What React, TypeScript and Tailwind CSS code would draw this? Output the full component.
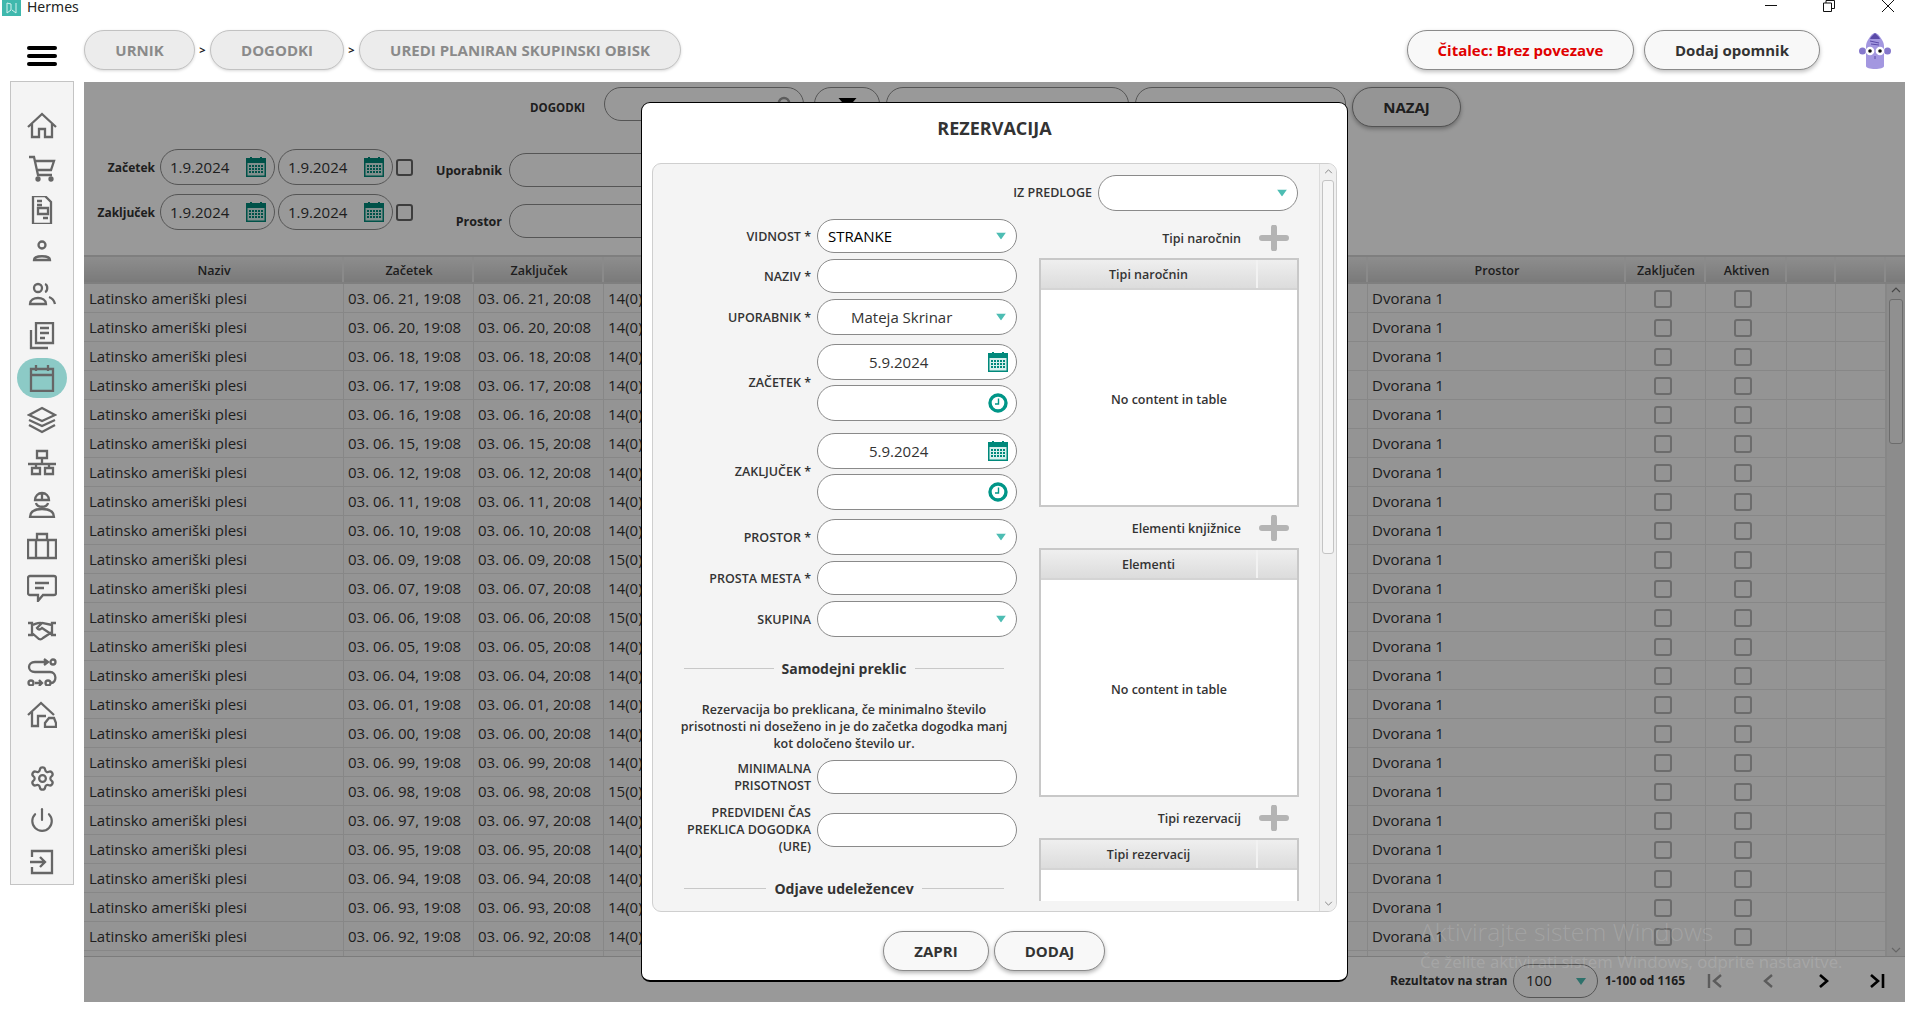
import type { ReactNode } from "react";
import { Power, Settings } from "lucide-react";

const rows = [
  ["21", "14"], ["20", "14"], ["18", "14"], ["17", "14"], ["16", "14"], ["15", "14"],
  ["12", "14"], ["11", "14"], ["10", "14"], ["09", "15"], ["07", "14"], ["06", "15"],
  ["05", "14"], ["04", "14"], ["01", "14"], ["00", "14"], ["99", "14"], ["98", "15"],
  ["97", "14"], ["95", "14"], ["94", "14"], ["93", "14"], ["92", "14"], ["91", "14"],
];

const sideIcon = "fill-none stroke-[#666] stroke-[2.3]";

function Ico({ children, active }: { children: ReactNode; active?: boolean }) {
  return (
    <div className="h-[42px] flex items-center justify-center">
      <div className={active ? "w-[50px] h-[40px] rounded-full bg-[#8ccac6] flex items-center justify-center" : "flex items-center justify-center"}>
        <svg viewBox="0 0 30 28" className={`w-[30px] h-[28px] ${sideIcon} ${active ? "stroke-[#3f5f5d]" : ""}`}>
          {children}
        </svg>
      </div>
    </div>
  );
}

function Sidebar() {
  return (
    <div className="ml-[10px] w-[64px] h-[804px] bg-[#f4f4f4] border border-[#c4c4c4] pt-[23px] flex flex-col">
      <Ico><path d="M1 15 15 2l14 13M5 12v13h7v-8h6v8h7V12" /></Ico>
      <Ico>
        <path d="M2 3h5l4 18h14M8 7h19l-3 9H10" />
        <circle cx="11" cy="25" r="1.5" className="fill-[#666]" />
        <circle cx="24" cy="25" r="1.5" className="fill-[#666]" />
      </Ico>
      <Ico>
        <path d="M6 0h12l6 6v22H6zM10 5h5M10 9h5M11 12h10v6H11zM16 22h5" />
      </Ico>
      <Ico>
        <circle cx="15" cy="7" r="3.5" />
        <path d="M7 22c0-5 16-5 16 0z" />
      </Ico>
      <Ico>
        <circle cx="11" cy="8" r="4" />
        <path d="M18 4c3 1 3 7 0 8M3 24c0-8 16-8 16 0zM22 17c3 1 5 3 6 7" />
      </Ico>
      <Ico>
        <path d="M9 1h17v20H9zM13 6h9M13 11h9M13 16h5M4 8v18h17" />
      </Ico>
      <Ico active>
        <path d="M4 5h22v22H4zM4 11h22M9 1v6M21 1v6" />
      </Ico>
      <Ico>
        <path d="M15 2 28 9l-13 6L2 9zM2 14l13 6 13-6M2 19l13 7 13-7" />
      </Ico>
      <Ico>
        <path d="M10 3h10v7H10zM15 10v6M1 16h28M5 20h8v6H5zM18 20h8v6h-8zM9 16v4M22 16v4" />
      </Ico>
      <Ico>
        <path d="M8 10a7 7 0 0 1 14 0zM15 3v7M9 13c1 5 11 5 12 0M3 27c0-7 6-8 12-8s12 1 12 8z" />
      </Ico>
      <Ico>
        <path d="M1 8h28v18H1zM10 8V2h10v6M9 8v18M21 8v18" />
      </Ico>
      <Ico>
        <path d="M3 2h24a2 2 0 0 1 2 2v15a2 2 0 0 1-2 2H16l-5 6v-6H3a2 2 0 0 1-2-2V4a2 2 0 0 1 2-2zM8 9h14M8 14h9" />
      </Ico>
      <Ico>
        <path d="M1 7h4v12H1M29 7h-4v12h4M5 9c4-1 6-3 10-2l10 2M5 17l7 6c2 1 3 0 4-1l9-6M15 7l-5 5c1 2 3 2 5 0l9 6" />
      </Ico>
      <Ico>
        <circle cx="26" cy="4" r="2.5" />
        <circle cx="4" cy="25" r="2.5" />
        <circle cx="21" cy="25" r="2.5" />
        <path d="M19 4H8c-8 0-8 10 0 10h15c7 0 7 11 1 11M17 1l4 3-4 3M8 25h6M12 22l3 3-3 3" />
      </Ico>
      <Ico>
        <path d="M1 15 14 3l13 12M5 12v14h6V16h8M22 18h5l2 5v4H18v-4z" />
      </Ico>
      <div className="mt-[22px]">
        <div className="h-[42px] flex items-center justify-center">
          <Settings className="w-[27px] h-[29px] text-[#666]" strokeWidth={2} />
        </div>
        <div className="h-[42px] flex items-center justify-center">
          <Power className="w-[26px] h-[26px] text-[#666]" strokeWidth={2} />
        </div>
        <Ico>
          <path d="M5 9V3h20v22H5v-6M3 14h15M13 9l5 5-5 5" />
        </Ico>
      </div>
    </div>
  );
}

function CalIcon({ className }: { className: string }) {
  return (
    <svg viewBox="0 0 20 20" className={className}>
      <rect x="0" y="1" width="20" height="19" fill="#00897b" />
      <rect x="4" y="0" width="2" height="2" fill="#00897b" />
      <rect x="14" y="0" width="2" height="2" fill="#00897b" />
      <rect x="1.5" y="6" width="17" height="12.5" fill="#d8efec" />
      {[8, 11, 14].map((y) =>
        [4, 7, 10, 13, 16].map((x) => <rect key={`${x}-${y}`} x={x - 1} y={y} width="2" height="2" fill="#00897b" />)
      )}
    </svg>
  );
}

function Clock() {
  return (
    <svg viewBox="0 0 20 20" className="w-[20px] h-[20px]">
      <circle cx="10" cy="10" r="8" fill="none" stroke="#009688" strokeWidth="3.4" />
      <path d="M10.5 5.5v5.5H7" fill="none" stroke="#009688" strokeWidth="1.4" />
    </svg>
  );
}

function Tri({ className = "" }: { className?: string }) {
  return (
    <svg viewBox="0 0 10 7" className={`w-[10px] h-[7px] ${className}`}>
      <path d="M0 0h10L5 7z" fill="#4dbdb3" />
    </svg>
  );
}

function Field({ h = "h-[34px]", children }: { h?: string; children?: ReactNode }) {
  return (
    <div className={`w-[200px] ${h} shrink-0 bg-white border-[1.5px] border-[#8a8a8a] rounded-full flex items-center text-[15px] text-[#333] relative`}>
      {children}
    </div>
  );
}

function FormRow({ label, children, className = "" }: { label: ReactNode; children: ReactNode; className?: string }) {
  return (
    <div className={`flex items-center ${className}`}>
      <div className="w-[158px] text-right text-[12.5px] leading-[17px] font-semibold text-[#333] shrink-0">{label}</div>
      <div className="ml-[6px]">{children}</div>
    </div>
  );
}

function SelectEnd() {
  return <Tri className="absolute right-[10px] top-1/2 -translate-y-1/2" />;
}

function DateField({ h = "h-[36px]" }: { h?: string }) {
  return (
    <Field h={h}>
      <span className="ml-[51px]">5.9.2024</span>
      <CalIcon className="absolute right-[8px] top-[7px] w-[20px] h-[20px]" />
    </Field>
  );
}

function TimeField() {
  return (
    <Field h="h-[36px]">
      <div className="absolute right-[8px] top-[7px]">
        <Clock />
      </div>
    </Field>
  );
}

function Divider({ title, className = "" }: { title: string; className?: string }) {
  return (
    <div className={`h-[20px] ml-[31px] w-[320px] flex items-center gap-[8px] ${className}`}>
      <div className="flex-1 h-px bg-[#c8c8c8]" />
      <span className="text-[14px] font-bold text-[#333]">{title}</span>
      <div className="flex-1 h-px bg-[#c8c8c8]" />
    </div>
  );
}

function Plus() {
  return (
    <svg viewBox="0 0 30 26" className="w-[30px] h-[26px] ml-[18px] mr-[10px]">
      <path d="M15 2.5v21M3 13h24" stroke="#b4b4b4" strokeWidth="6" strokeLinecap="round" />
    </svg>
  );
}

function SubHead({ title, className = "" }: { title: string; className?: string }) {
  return (
    <div className={`flex items-center justify-end text-[12.5px] font-semibold text-[#333] ${className}`}>
      <span className="pt-[2px]">{title}</span>
      <Plus />
    </div>
  );
}

function MiniTable({ title }: { title: string }) {
  return (
    <div className="mt-[7px] w-[260px] h-[249px] shrink-0 border-2 border-[#c8c8c8] bg-white flex flex-col">
      <div className="h-[30px] shrink-0 flex border-b-2 border-[#d4d4d4] bg-gradient-to-b from-[#efefef] to-[#dcdcdc] text-[12.5px] font-semibold text-[#333]">
        <div className="flex-1 flex items-center justify-center pt-[3px]">{title}</div>
        <div className="w-[41px] border-l-2 border-[#f2f2f2]" />
      </div>
      <div className="flex-1 flex items-center justify-center pt-[5px] text-[12.5px] font-semibold text-[#333]">No content in table</div>
    </div>
  );
}

function Modal() {
  return (
    <div className="absolute left-[557px] top-[20px] w-[707px] h-[880px] bg-white border border-black rounded-[9px] border-b-2 flex flex-col font-['Open_Sans',sans-serif]">
      <div className="h-[60px] w-full flex items-center justify-center text-[18px] font-bold text-[#333] pb-[9px]">REZERVACIJA</div>
      <div className="ml-[10px] w-[685px] h-[749px] bg-[#f4f4f4] border border-[#cfcfcf] rounded-[9px] flex overflow-hidden">
        <div className="flex-1 h-[737px] overflow-hidden">
          <div className="h-[47px] pt-[11px] pr-[21px] flex items-center justify-end">
            <span className="pt-[1px] text-[12.5px] font-semibold text-[#333] mr-[6px]">IZ PREDLOGE</span>
            <Field h="h-[36px]">
              <SelectEnd />
            </Field>
          </div>
          <div className="flex">
            <div className="w-[386px] shrink-0">
              <FormRow label="VIDNOST *" className="mt-[8px]">
                <Field>
                  <span className="ml-[10px] text-black">STRANKE</span>
                  <SelectEnd />
                </Field>
              </FormRow>
              <FormRow label="NAZIV *" className="mt-[6px]">
                <Field />
              </FormRow>
              <FormRow label="UPORABNIK *" className="mt-[6px]">
                <Field h="h-[36px]">
                  <span className="ml-[33px]">Mateja Skrinar</span>
                  <SelectEnd />
                </Field>
              </FormRow>
              <FormRow label="ZAČETEK *" className="mt-[9px]">
                <div className="flex flex-col gap-[5px]">
                  <DateField />
                  <TimeField />
                </div>
              </FormRow>
              <FormRow label="ZAKLJUČEK *" className="mt-[12px]">
                <div className="flex flex-col gap-[5px]">
                  <DateField />
                  <TimeField />
                </div>
              </FormRow>
              <FormRow label="PROSTOR *" className="mt-[9px]">
                <Field h="h-[36px]">
                  <SelectEnd />
                </Field>
              </FormRow>
              <FormRow label="PROSTA MESTA *" className="mt-[6px]">
                <Field />
              </FormRow>
              <FormRow label="SKUPINA" className="mt-[6px]">
                <Field h="h-[36px]">
                  <SelectEnd />
                </Field>
              </FormRow>
              <Divider title="Samodejni preklic" className="mt-[21px]" />
              <p className="mt-[23px] ml-[25px] w-[332px] text-center text-[12.5px] leading-[17px] font-semibold text-[#333]">
                Rezervacija bo preklicana, če minimalno število prisotnosti ni doseženo in je do začetka dogodka manj kot določeno število ur.
              </p>
              <FormRow
                className="mt-[8px]"
                label={
                  <>
                    MINIMALNA
                    <br />
                    PRISOTNOST
                  </>
                }
              >
                <Field />
              </FormRow>
              <FormRow
                className="mt-[10px]"
                label={
                  <>
                    PREDVIDENI ČAS
                    <br />
                    PREKLICA DOGODKA
                    <br />
                    (URE)
                  </>
                }
              >
                <Field />
              </FormRow>
              <Divider title="Odjave udeležencev" className="mt-[23px]" />
            </div>
            <div className="w-[260px] shrink-0">
              <SubHead title="Tipi naročnin" className="mt-[14px]" />
              <MiniTable title="Tipi naročnin" />
              <SubHead title="Elementi knjižnice" className="mt-[8px]" />
              <MiniTable title="Elementi" />
              <SubHead title="Tipi rezervacij" className="mt-[8px]" />
              <MiniTable title="Tipi rezervacij" />
            </div>
          </div>
        </div>
        <div className="w-[17px] shrink-0 border-l border-[#dcdcdc] bg-[#f0f0f0] flex flex-col items-center relative">
          <svg viewBox="0 0 10 6" className="w-[9px] h-[5px] mt-[5px]">
            <path d="M1 5l4-4 4 4" fill="none" stroke="#888" strokeWidth="1.2" />
          </svg>
          <div className="mt-[6px] w-[12px] h-[374px] bg-[#f6f6f6] border border-[#c4c4c4] rounded-[3px]" />
          <svg viewBox="0 0 10 6" className="w-[9px] h-[5px] absolute bottom-[5px]">
            <path d="M1 1l4 4 4-4" fill="none" stroke="#888" strokeWidth="1.2" />
          </svg>
        </div>
      </div>
      <div className="flex-1 w-full flex items-center justify-center gap-[5px] pt-[10px] pr-[1px]">
        <button className="w-[106px] h-[40px] rounded-full bg-[#f8f8f8] border-[1.5px] border-[#8a8a8a] shadow-[0_2px_4px_rgba(0,0,0,0.3)] text-[15px] font-bold text-[#333]">ZAPRI</button>
        <button className="w-[111px] h-[40px] rounded-full bg-[#f8f8f8] border-[1.5px] border-[#8a8a8a] shadow-[0_2px_4px_rgba(0,0,0,0.3)] text-[15px] font-bold text-[#333]">DODAJ</button>
      </div>
    </div>
  );
}

const colHead = "h-full flex items-center justify-center border-r-2 border-[#e6e6e6] text-[12.5px] font-semibold text-[#333] pt-[3px] pl-[2px]";
const colCell = "h-full flex items-center border-r border-[#e2e2e2]";

function CheckBox() {
  return <div className="w-[18px] h-[18px] rounded-[3px] border-2 border-[#b4b4b4] bg-[#f7f7f7] -translate-x-[3px] translate-y-[1px]" />;
}

function FilterPill({ w, h = "h-[34px]", children }: { w: string; h?: string; children?: ReactNode }) {
  return <div className={`${w} ${h} shrink-0 bg-white border-[1.5px] border-[#8e8e8e] rounded-full flex items-center relative text-[15px] text-[#333]`}>{children}</div>;
}

function DatePill() {
  return (
    <FilterPill w="w-[115px]" h="h-[36px]">
      <span className="ml-[9px]">1.9.2024</span>
      <CalIcon className="absolute right-[8px] top-[7px] w-[20px] h-[20px]" />
    </FilterPill>
  );
}

function MainPanel() {
  return (
    <div className="w-[1821px] h-[920px] relative flex flex-col bg-white font-['Open_Sans',sans-serif] overflow-hidden">
      <div className="h-[173px] shrink-0">
        <div className="h-[45px] pt-[5px] pl-[446px] flex items-start">
          <span className="w-[57px] h-[34px] pt-[8px] flex items-center text-[11.5px] font-bold text-[#333]">DOGODKI</span>
          <FilterPill w="w-[200px] ml-[17px]">
            <svg viewBox="0 0 16 16" className="w-[16px] h-[16px] absolute right-[10px] top-[8px]">
              <circle cx="7" cy="7" r="5" fill="none" stroke="#999" strokeWidth="2.5" />
            </svg>
          </FilterPill>
          <FilterPill w="w-[66px] ml-[10px]">
            <svg viewBox="0 0 18 12" className="w-[19px] h-[12px] absolute left-[23px] top-[10px]">
              <path d="M0 0h18L11 8v4H7V8z" fill="#000" />
            </svg>
          </FilterPill>
          <FilterPill w="w-[243px] ml-[6px]" />
          <FilterPill w="w-[211px] ml-[6px]" />
          <button className="ml-[6px] w-[109px] h-[40px] rounded-full bg-[#f8f8f8] border-[1.5px] border-[#8a8a8a] shadow-[0_2px_4px_rgba(0,0,0,0.3)] text-[15px] font-bold text-[#333]">NAZAJ</button>
        </div>
        <div className="flex mt-[22px]">
          <div className="flex flex-col gap-[9px]">
            {["Začetek", "Zaključek"].map((label) => (
              <div key={label} className="flex items-center">
                <span className="w-[71px] pt-[1px] text-right text-[12px] font-bold text-[#333]">{label}</span>
                <div className="ml-[5px] flex gap-[3px]">
                  <DatePill />
                  <DatePill />
                </div>
                <div className="ml-[3px] w-[17px] h-[17px] rounded-[3px] border-2 border-[#666] bg-white" />
              </div>
            ))}
          </div>
          <div className="ml-[9px] pt-[4px] flex flex-col gap-[17px]">
            {["Uporabnik", "Prostor"].map((label) => (
              <div key={label} className="flex items-center">
                <span className="w-[80px] pt-[2px] text-right text-[12.5px] font-bold text-[#333]">{label}</span>
                <FilterPill w="w-[200px] ml-[7px]" />
              </div>
            ))}
          </div>
        </div>
      </div>

      <div className="h-[29px] shrink-0 flex border-y-2 border-[#d4d4d4] bg-gradient-to-b from-[#ececec] to-[#cccccc]">
        <div className={`${colHead} w-[260px]`}>Naziv</div>
        <div className={`${colHead} w-[130px]`}>Začetek</div>
        <div className={`${colHead} w-[130px]`}>Zaključek</div>
        <div className={`${colHead} w-[764px]`} />
        <div className={`${colHead} w-[258px]`}>Prostor</div>
        <div className={`${colHead} w-[80px]`}>Zaključen</div>
        <div className={`${colHead} w-[81px]`}>Aktiven</div>
        <div className={`${colHead} w-[49px]`} />
        <div className={`${colHead} w-[50px]`} />
      </div>

      <div className="h-[673px] shrink-0 flex border-b border-[#cfcfcf] overflow-hidden">
        <div className="w-[1802px] shrink-0">
          {rows.map(([day, count]) => (
            <div key={day} className="h-[29px] flex bg-[#f7f7f7] border-b border-[#e2e2e2] text-[15px] text-[#333]">
              <div className={`${colCell} w-[260px] pl-[5px]`}>Latinsko ameriški plesi</div>
              <div className={`${colCell} w-[130px] pl-[4px]`}>{`03. 06. ${day}, 19:08`}</div>
              <div className={`${colCell} w-[130px] pl-[4px]`}>{`03. 06. ${day}, 20:08`}</div>
              <div className={`${colCell} w-[764px] pl-[4px]`}>{`${count}(0)`}</div>
              <div className={`${colCell} w-[258px] pl-[4px]`}>Dvorana 1</div>
              <div className={`${colCell} w-[80px] justify-center`}>
                <CheckBox />
              </div>
              <div className={`${colCell} w-[81px] justify-center`}>
                <CheckBox />
              </div>
              <div className={`${colCell} w-[49px]`} />
              <div className={`${colCell} w-[50px]`} />
            </div>
          ))}
        </div>
        <div className="w-[19px] shrink-0 bg-[#eaeaea] flex flex-col items-center relative border-l border-[#e2e2e2]">
          <svg viewBox="0 0 10 6" className="w-[10px] h-[6px] mt-[3px]">
            <path d="M1 5l4-4 4 4" fill="none" stroke="#777" strokeWidth="1.2" />
          </svg>
          <div className="mt-[6px] w-[14px] h-[145px] bg-[#f0f0f0] border border-[#b4b4b4] rounded-[3px]" />
          <svg viewBox="0 0 10 6" className="w-[10px] h-[6px] absolute bottom-[3px]">
            <path d="M1 1l4 4 4-4" fill="none" stroke="#aaa" strokeWidth="1.2" />
          </svg>
        </div>
      </div>

      <div className="flex-1 flex items-center pl-[1306px] pt-[2px] text-[#333]">
        <span className="text-[12px] font-bold w-[117px] whitespace-nowrap">Rezultatov na stran</span>
        <FilterPill w="w-[85px] ml-[6px]">
          <span className="ml-[12px]">100</span>
          <Tri className="absolute right-[11px] top-[13px]" />
        </FilterPill>
        <span className="ml-[7px] text-[12px] font-bold whitespace-nowrap w-[80px]">1-100 od 1165</span>
        <svg viewBox="0 0 16 16" className="ml-[22px] w-[16px] h-[16px]">
          <path d="M2 1v14M14 2 7 8l7 6" fill="none" stroke="#999" strokeWidth="2.4" />
        </svg>
        <svg viewBox="0 0 10 16" className="ml-[40px] w-[10px] h-[16px]">
          <path d="M9 2 2 8l7 6" fill="none" stroke="#999" strokeWidth="2.4" />
        </svg>
        <svg viewBox="0 0 10 16" className="ml-[46px] w-[10px] h-[16px]">
          <path d="M1 2l7 6-7 6" fill="none" stroke="#000" strokeWidth="2.6" />
        </svg>
        <svg viewBox="0 0 16 16" className="ml-[40px] w-[16px] h-[16px]">
          <path d="M14 1v14M2 2l7 6-7 6" fill="none" stroke="#000" strokeWidth="2.6" />
        </svg>
      </div>

      <div className="absolute inset-0 bg-black/40" />

      <div className="absolute left-[1336px] top-[834px] text-[24.7px] font-light leading-[32px] text-white/15 whitespace-nowrap">Aktivirajte sistem Windows</div>
      <div className="absolute left-[1336px] top-[870px] text-[16.8px] leading-[20px] text-white/15 whitespace-nowrap">Če želite aktivirati sistem Windows, odprite nastavitve.</div>

      <Modal />
    </div>
  );
}

function Crumb({ w, children }: { w: string; children: string }) {
  return (
    <div className={`${w} h-[40px] pt-[1px] rounded-full bg-[#ececec] border-[1.5px] border-[#c2c2c2] shadow-[0_1px_3px_rgba(0,0,0,0.15)] flex items-center justify-center text-[15px] font-bold text-[#8a8a8a]`}>
      {children}
    </div>
  );
}

export default function App() {
  return (
    <div className="w-[1919px] h-[1017px] overflow-hidden bg-white flex flex-col font-['Open_Sans',sans-serif]">
      <div className="h-[30px] shrink-0 flex items-start">
        <svg viewBox="0 0 19 16" className="ml-[2px] w-[19px] h-[16px]">
          <rect width="19" height="16" fill="#3fb8ad" />
          <path d="M5 3v10l4-3V4zM14 3v10l-4-3" fill="none" stroke="#d5f1ee" strokeWidth="1" />
        </svg>
        <span className="ml-[6px] text-[14px] leading-[14px] text-[#222] font-['Noto_Sans',sans-serif]">Hermes</span>
        <svg viewBox="0 0 12 12" className="ml-[1686px] w-[12px] h-[12px]">
          <path d="M0 5.500h12" stroke="#111" strokeWidth="1" />
        </svg>
        <svg viewBox="0 0 12 12" className="ml-[46px] w-[12px] h-[12px]">
          <path d="M.5 3h8v8.500h-8zM3 3V.5h8.500v8H8.500" fill="none" stroke="#111" strokeWidth="1" />
        </svg>
        <svg viewBox="0 0 12 12" className="ml-[47px] w-[12px] h-[12px]">
          <path d="M0 0l12 12M12 0 0 12" stroke="#111" strokeWidth="1" />
        </svg>
      </div>

      <div className="h-[52px] shrink-0 flex items-start">
        <div className="w-[84px] shrink-0 pl-[27px] pt-[16px]">
          <div className="w-[30px] flex flex-col gap-[4px]">
            <div className="h-[4px] rounded-full bg-black" />
            <div className="h-[4px] rounded-full bg-black" />
            <div className="h-[4px] rounded-full bg-black" />
          </div>
        </div>
        <div className="flex items-center">
          <Crumb w="w-[111px]">URNIK</Crumb>
          <span className="w-[15px] text-center text-[11px] font-bold text-[#222]">&gt;</span>
          <Crumb w="w-[134px]">DOGODKI</Crumb>
          <span className="w-[15px] text-center text-[11px] font-bold text-[#222]">&gt;</span>
          <Crumb w="w-[322px]">UREDI PLANIRAN SKUPINSKI OBISK</Crumb>
        </div>
        <button className="ml-[726px] w-[227px] h-[40px] pt-[1px] rounded-full bg-[#f8f8f8] border-[1.5px] border-[#8a8a8a] shadow-[0_2px_4px_rgba(0,0,0,0.25)] text-[15px] font-bold text-[#e00000]">Čitalec: Brez povezave</button>
        <button className="ml-[10px] w-[176px] h-[40px] pt-[1px] rounded-full bg-[#f8f8f8] border-[1.5px] border-[#8a8a8a] shadow-[0_2px_4px_rgba(0,0,0,0.25)] text-[15px] font-bold text-[#333]">Dodaj opomnik</button>
        <svg viewBox="0 0 32 38" className="ml-[39px] mt-[2px] w-[32px] h-[38px]">
          <path d="M7 14c0-5 6-13 9-13s9 8 9 13v20c0 2-4 3-9 3s-9-1-9-3z" fill="#a397e0" />
          <path d="M12 5l4-4 4 4 1 2H11z" fill="#5a4aa8" />
          <circle cx="3.500" cy="19" r="3.500" fill="#8578cc" />
          <circle cx="28.500" cy="19" r="3.500" fill="#8578cc" />
          <circle cx="11" cy="19" r="4.300" fill="#fff" />
          <circle cx="21" cy="19" r="4.300" fill="#fff" />
          <circle cx="11" cy="19" r="1.800" fill="#111" />
          <circle cx="21" cy="19" r="1.800" fill="#111" />
          <path d="M11 9l9 2M12 12l8 1M16 24v3" stroke="#5a4aa8" strokeWidth="1" fill="none" />
        </svg>
      </div>

      <div className="flex items-start">
        <div className="w-[84px] shrink-0 -mt-[1px]">
          <Sidebar />
        </div>
        <MainPanel />
      </div>
    </div>
  );
}
